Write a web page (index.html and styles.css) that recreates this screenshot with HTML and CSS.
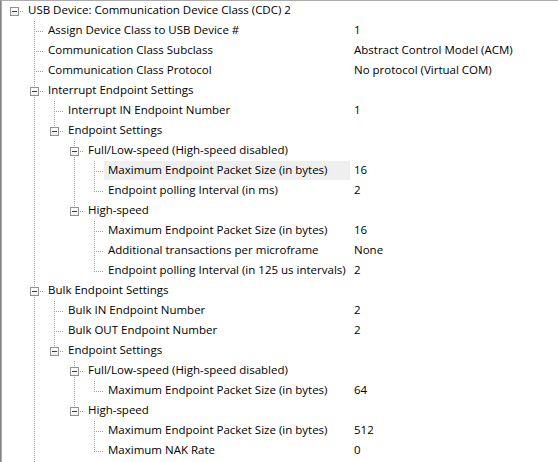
FILE: index.html
```html
<!DOCTYPE html>
<html>
<head>
<meta charset="utf-8">
<link rel="stylesheet" href="styles.css">
</head>
<body>
<div class="tree">
  <div class="row"><div class="name"><span class="g own root"><i class="box"></i></span><span class="label">USB Device: Communication Device Class (CDC) 2</span></div><div class="value"></div></div>
  <div class="row"><div class="name"><span class="g"></span><span class="g own tee"></span><span class="label">Assign Device Class to USB Device #</span></div><div class="value">1</div></div>
  <div class="row"><div class="name"><span class="g"></span><span class="g own tee"></span><span class="label">Communication Class Subclass</span></div><div class="value">Abstract Control Model (ACM)</div></div>
  <div class="row"><div class="name"><span class="g"></span><span class="g own tee"></span><span class="label">Communication Class Protocol</span></div><div class="value">No protocol (Virtual COM)</div></div>
  <div class="row"><div class="name"><span class="g"></span><span class="g own tee"><i class="box"></i></span><span class="label">Interrupt Endpoint Settings</span></div><div class="value"></div></div>
  <div class="row"><div class="name"><span class="g"></span><span class="g pipe"></span><span class="g own tee"></span><span class="label">Interrupt IN Endpoint Number</span></div><div class="value">1</div></div>
  <div class="row"><div class="name"><span class="g"></span><span class="g pipe"></span><span class="g own ell"><i class="box"></i></span><span class="label">Endpoint Settings</span></div><div class="value"></div></div>
  <div class="row"><div class="name"><span class="g"></span><span class="g pipe"></span><span class="g"></span><span class="g own tee"><i class="box"></i></span><span class="label">Full/Low-speed (High-speed disabled)</span></div><div class="value"></div></div>
  <div class="row"><div class="name"><span class="g"></span><span class="g pipe"></span><span class="g"></span><span class="g pipe"></span><span class="g own tee"></span><span class="label selected">Maximum Endpoint Packet Size (in bytes)</span></div><div class="value">16</div></div>
  <div class="row"><div class="name"><span class="g"></span><span class="g pipe"></span><span class="g"></span><span class="g pipe"></span><span class="g own ell"></span><span class="label">Endpoint polling Interval (in ms)</span></div><div class="value">2</div></div>
  <div class="row"><div class="name"><span class="g"></span><span class="g pipe"></span><span class="g"></span><span class="g own ell"><i class="box"></i></span><span class="label">High-speed</span></div><div class="value"></div></div>
  <div class="row"><div class="name"><span class="g"></span><span class="g pipe"></span><span class="g"></span><span class="g"></span><span class="g own tee"></span><span class="label">Maximum Endpoint Packet Size (in bytes)</span></div><div class="value">16</div></div>
  <div class="row"><div class="name"><span class="g"></span><span class="g pipe"></span><span class="g"></span><span class="g"></span><span class="g own tee"></span><span class="label">Additional transactions per microframe</span></div><div class="value">None</div></div>
  <div class="row"><div class="name"><span class="g"></span><span class="g pipe"></span><span class="g"></span><span class="g"></span><span class="g own ell"></span><span class="label">Endpoint polling Interval (in 125 us intervals)</span></div><div class="value">2</div></div>
  <div class="row"><div class="name"><span class="g"></span><span class="g own tee"><i class="box"></i></span><span class="label">Bulk Endpoint Settings</span></div><div class="value"></div></div>
  <div class="row"><div class="name"><span class="g"></span><span class="g pipe"></span><span class="g own tee"></span><span class="label">Bulk IN Endpoint Number</span></div><div class="value">2</div></div>
  <div class="row"><div class="name"><span class="g"></span><span class="g pipe"></span><span class="g own tee"></span><span class="label">Bulk OUT Endpoint Number</span></div><div class="value">2</div></div>
  <div class="row"><div class="name"><span class="g"></span><span class="g pipe"></span><span class="g own ell"><i class="box"></i></span><span class="label">Endpoint Settings</span></div><div class="value"></div></div>
  <div class="row"><div class="name"><span class="g"></span><span class="g pipe"></span><span class="g"></span><span class="g own tee"><i class="box"></i></span><span class="label">Full/Low-speed (High-speed disabled)</span></div><div class="value"></div></div>
  <div class="row"><div class="name"><span class="g"></span><span class="g pipe"></span><span class="g"></span><span class="g pipe"></span><span class="g own ell"></span><span class="label">Maximum Endpoint Packet Size (in bytes)</span></div><div class="value">64</div></div>
  <div class="row"><div class="name"><span class="g"></span><span class="g pipe"></span><span class="g"></span><span class="g own ell"><i class="box"></i></span><span class="label">High-speed</span></div><div class="value"></div></div>
  <div class="row"><div class="name"><span class="g"></span><span class="g pipe"></span><span class="g"></span><span class="g"></span><span class="g own tee"></span><span class="label">Maximum Endpoint Packet Size (in bytes)</span></div><div class="value">512</div></div>
  <div class="row"><div class="name"><span class="g"></span><span class="g pipe"></span><span class="g"></span><span class="g"></span><span class="g own ell"></span><span class="label">Maximum NAK Rate</span></div><div class="value">0</div></div>
  <div class="row"><div class="name"><span class="g"></span><span class="g pipe"></span></div><div class="value"></div></div>
</div>
</body>
</html>
```

FILE: styles.css
```css
html, body {
  margin: 0;
  padding: 0;
  background: #ffffff;
}

body {
  width: 558px;
  height: 462px;
  overflow: hidden;
  font-family: "Open Sans", "Noto Sans", "Liberation Sans", sans-serif;
  font-size: 11.5px;
  color: #000000;
}

.tree {
  border-top: 1px solid #ababab;
  border-left: 1px solid #858585;
  box-shadow: inset 1px 0 0 #a9a9a9;
  padding-left: 1px;
  height: 461px;
  overflow: hidden;
}

.row {
  display: flex;
  height: 20px;
  line-height: 18px;
}

.name {
  display: flex;
  width: 348px;
  flex: none;
  overflow: hidden;
  white-space: nowrap;
}

.value {
  padding-left: 4px;
  white-space: nowrap;
}

.g {
  position: relative;
  flex: none;
  width: 20px;
  height: 20px;
}

.g.own {
  width: 22px;
}

.pipe::before,
.tee::before,
.ell::before {
  content: "";
  position: absolute;
  left: 12px;
  top: 0;
  width: 1px;
  height: 20px;
  background: repeating-linear-gradient(to bottom, #a0a0a0 0 1px, transparent 1px 2px);
}

.ell::before {
  height: 11px;
}

.own::after {
  content: "";
  position: absolute;
  left: 13px;
  top: 10px;
  width: 9px;
  height: 1px;
  background: repeating-linear-gradient(to right, transparent 0 1px, #a0a0a0 1px 2px);
}

.box {
  position: absolute;
  left: 8px;
  top: 6px;
  width: 9px;
  height: 9px;
  box-sizing: border-box;
  border: 1px solid #919191;
  background: linear-gradient(#ffffff, #f0f0f0);
  z-index: 1;
}

.box::after {
  content: "";
  position: absolute;
  left: 1px;
  top: 3px;
  width: 5px;
  height: 1px;
  background: #2a3a70;
}

.label {
  flex: 1;
  padding-left: 4px;
}

.label.selected {
  background: linear-gradient(#efefef, #efefef) no-repeat 0 0 / 100% 19px;
}
```
